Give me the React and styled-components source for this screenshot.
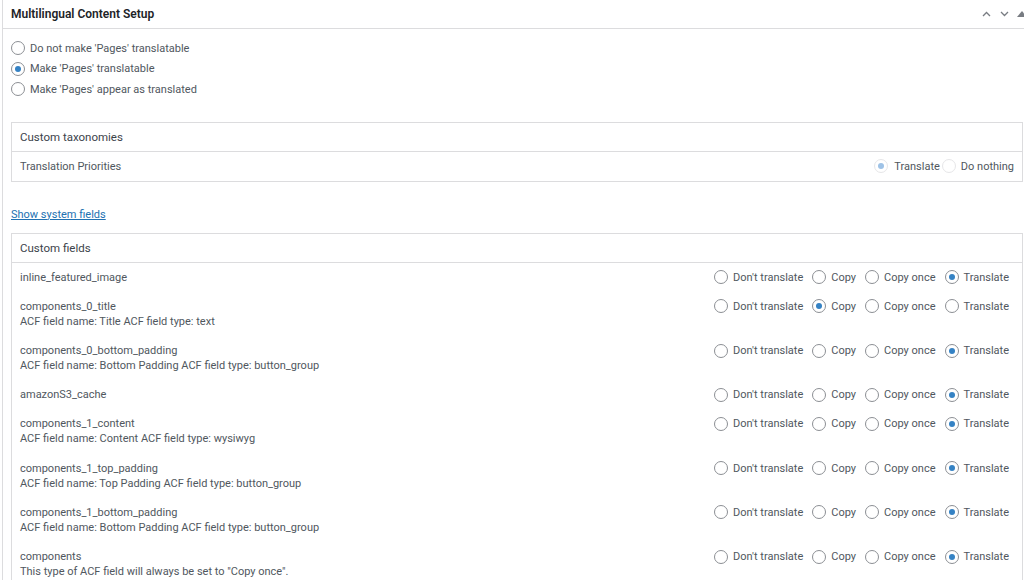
import React from "react";
import styled, { createGlobalStyle } from "styled-components";

const GlobalStyle = createGlobalStyle`
    html, body {
        margin: 0;
        padding: 0;
        background: #fff;
        overflow: hidden;
    }
    body {
        font-family: Roboto, "Noto Sans", "Liberation Sans", sans-serif;
        font-size: 11px;
        color: #50575e;
    }
`;

const Page = styled.div`
    width: 1024px;
    height: 580px;
    padding-left: 2px;
    box-sizing: border-box;
    overflow: hidden;
`;

const Postbox = styled.div`
    border-left: 1px solid #dcdcde;
    min-height: 100%;
`;

const PostboxHeader = styled.div`
    height: 29px;
    box-sizing: border-box;
    display: flex;
    align-items: center;
    justify-content: space-between;
    border-bottom: 1px solid #dcdcde;
    padding-left: 8px;
`;

const Title = styled.h2`
    margin: 0;
    font-size: 12px;
    font-weight: 600;
    color: #1d2327;
`;

const Handles = styled.div`
    display: flex;
    align-items: center;
    gap: 8px;
    margin-right: -3px;
`;

const HandleButton = styled.button`
    border: 0;
    background: none;
    padding: 0;
    width: 10px;
    height: 10px;
    display: flex;
    align-items: center;
    justify-content: center;
    color: #787c82;
`;

const Inside = styled.div`
    padding: 9px 1px 0 8px;
`;

const RadioList = styled.div`
    display: flex;
    flex-direction: column;
    margin-bottom: 22px;
`;

const RadioLine = styled.label`
    display: flex;
    align-items: center;
    gap: 5px;
    height: 20.5px;
`;

const Circle = styled.span`
    width: 14px;
    height: 14px;
    box-sizing: border-box;
    border-radius: 50%;
    border: 1px solid ${p => (p.$disabled ? "#e6e6e8" : "#8c8f94")};
    background: #fff;
    display: flex;
    align-items: center;
    justify-content: center;
    flex: none;

    &::after {
        content: "";
        width: 6px;
        height: 6px;
        border-radius: 50%;
        background: ${p => (p.$disabled ? "#9ec2e6" : "#3582c4")};
        display: ${p => (p.$checked ? "block" : "none")};
    }
`;

const Box = styled.div`
    border: 1px solid #dcdcde;
`;

const BoxHeader = styled.div`
    height: 29px;
    box-sizing: border-box;
    border-bottom: 1px solid #dcdcde;
    display: flex;
    align-items: center;
    padding-left: 8px;
    font-size: 11.5px;
    color: #3c434a;
`;

const Row = styled.div`
    display: flex;
    justify-content: space-between;
    align-items: flex-start;
    padding: 7px ${p => p.$right || 13}px 7.2px 8px;
    line-height: 15px;
`;

const FieldText = styled.div`
    display: flex;
    flex-direction: column;
`;

const Options = styled.div`
    display: flex;
    align-items: center;
    gap: ${p => p.$gap ?? 9}px;
`;

const Option = styled.label`
    display: flex;
    align-items: center;
    gap: ${p => p.$gap ?? 5}px;
    height: 15px;
`;

const Link = styled.a`
    display: block;
    margin: 25px 0 11px;
    color: #2271b1;
    text-decoration: underline;
    line-height: 15px;
`;

const Chevron = ({ up }) => (
    <svg width="9" height="6" viewBox="0 0 9 6" fill="none" stroke="currentColor" strokeWidth="1.3">
        <path d={up ? "M1 5 L4.5 1.5 L8 5" : "M1 1 L4.5 4.5 L8 1"} />
    </svg>
);

const Triangle = () => (
    <svg width="10" height="6" viewBox="0 0 10 6">
        <path d="M0 6 L5 0 L10 6 Z" fill="currentColor" />
    </svg>
);

const fields = [
    { name: "inline_featured_image", value: "translate" },
    { name: "components_0_title", note: "ACF field name: Title ACF field type: text", value: "copy" },
    { name: "components_0_bottom_padding", note: "ACF field name: Bottom Padding ACF field type: button_group", value: "translate" },
    { name: "amazonS3_cache", value: "translate" },
    { name: "components_1_content", note: "ACF field name: Content ACF field type: wysiwyg", value: "translate" },
    { name: "components_1_top_padding", note: "ACF field name: Top Padding ACF field type: button_group", value: "translate" },
    { name: "components_1_bottom_padding", note: "ACF field name: Bottom Padding ACF field type: button_group", value: "translate" },
    { name: "components", note: 'This type of ACF field will always be set to "Copy once".', value: "translate" },
];

const choices = [
    { key: "none", label: "Don't translate" },
    { key: "copy", label: "Copy" },
    { key: "copy-once", label: "Copy once" },
    { key: "translate", label: "Translate" },
];

const pageModes = [
    { label: "Do not make 'Pages' translatable", checked: false },
    { label: "Make 'Pages' translatable", checked: true },
    { label: "Make 'Pages' appear as translated", checked: false },
];

export default function App() {
    return (
        <Page>
            <GlobalStyle />
            <Postbox>
                <PostboxHeader>
                    <Title>Multilingual Content Setup</Title>
                    <Handles>
                        <HandleButton><Chevron up /></HandleButton>
                        <HandleButton><Chevron /></HandleButton>
                        <HandleButton><Triangle /></HandleButton>
                    </Handles>
                </PostboxHeader>
                <Inside>
                    <RadioList>
                        {pageModes.map(m => (
                            <RadioLine key={m.label}>
                                <Circle $checked={m.checked} />
                                {m.label}
                            </RadioLine>
                        ))}
                    </RadioList>

                    <Box>
                        <BoxHeader>Custom taxonomies</BoxHeader>
                        <Row $right={8}>
                            <span>Translation Priorities</span>
                            <Options $gap={2}>
                                <Option $gap={6}><Circle $checked $disabled />Translate</Option>
                                <Option $gap={5}><Circle $disabled />Do nothing</Option>
                            </Options>
                        </Row>
                    </Box>

                    <Link href="#">Show system fields</Link>

                    <Box>
                        <BoxHeader>Custom fields</BoxHeader>
                        {fields.map(f => (
                            <Row key={f.name}>
                                <FieldText>
                                    <span>{f.name}</span>
                                    {f.note && <span>{f.note}</span>}
                                </FieldText>
                                <Options>
                                    {choices.map(c => (
                                        <Option key={c.key}>
                                            <Circle $checked={f.value === c.key} />
                                            {c.label}
                                        </Option>
                                    ))}
                                </Options>
                            </Row>
                        ))}
                    </Box>
                </Inside>
            </Postbox>
        </Page>
    );
}
